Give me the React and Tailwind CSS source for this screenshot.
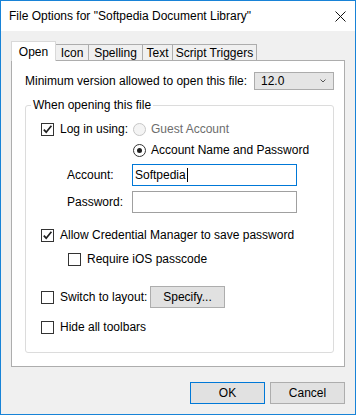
import React from "react";

function Checkbox({ checked }) {
  return (
    <span className="flex h-[13px] w-[13px] shrink-0 items-center justify-center border border-[#333333] bg-white">
      {checked && (
        <svg width="11" height="11" viewBox="0 0 11 11">
          <path d="M1.8 5.6 L4.2 8.2 L9.4 1.8" fill="none" stroke="#1f1f1f" strokeWidth="1.7" />
        </svg>
      )}
    </span>
  );
}

function Radio({ selected, disabled }) {
  return (
    <span
      className={
        disabled
          ? "flex h-[13px] w-[13px] shrink-0 items-center justify-center rounded-full border border-[#c6c6c6] bg-[#f4f4f4]"
          : "flex h-[13px] w-[13px] shrink-0 items-center justify-center rounded-full border border-[#333333] bg-white"
      }
    >
      {selected && <span className="h-[5px] w-[5px] rounded-full bg-[#1f1f1f]" />}
    </span>
  );
}

export default function App() {
  const tabs = [
    { name: "Icon", w: "w-[33px]" },
    { name: "Spelling", w: "w-[54px]" },
    { name: "Text", w: "w-[30px]" },
    { name: "Script Triggers", w: "w-[84px]" },
  ];

  return (
    <div className="flex h-[415px] w-[356px] flex-col border border-[#1883d7] bg-[#f0f0f0] font-['Liberation_Sans',Arial,sans-serif] text-[12px] leading-[16px] text-black">
      {/* Titelleiste */}
      <div className="flex h-[30px] shrink-0 items-center justify-between bg-white pl-[8px] pr-[9px]">
        <span className="pb-px">File Options for "Softpedia Document Library"</span>
        <svg width="11" height="11" viewBox="0 0 11 11" className="mt-px">
          <path d="M0.5 0.5 L10.5 10.5 M10.5 0.5 L0.5 10.5" stroke="#111" strokeWidth="1" />
        </svg>
      </div>

      <div className="flex flex-1 flex-col px-[10px] pt-[10px]">
        {/* Reiter */}
        <div className="flex h-[19px] items-end">
          <div className="relative z-10 -mb-px flex h-[20px] w-[45px] items-center justify-center border border-b-0 border-[#d9d9d9] bg-white">
            Open
          </div>
          {tabs.map((t) => (
            <div
              key={t.name}
              className={`flex h-[16px] items-center justify-center border-t border-r border-[#adadad] bg-[#f0f0f0] pt-px ${t.w}`}
            >
              {t.name}
            </div>
          ))}
        </div>

        {/* Inhalt */}
        <div className="h-[307px] border border-[#adadad] bg-white pl-[13px] pr-[10px] pt-[11px]">
          <div className="flex h-[18px] items-center justify-between">
            <span>Minimum version allowed to open this file:</span>
            <div className="flex h-[18px] w-[80px] items-center justify-between border border-[#acacac] bg-[#e5e5e5] pl-[6px] pr-[7px]">
              <span>12.0</span>
              <svg width="6" height="4" viewBox="0 0 6 4">
                <path d="M0.5 0.5 L3 3 L5.5 0.5" fill="none" stroke="#555" strokeWidth="1" />
              </svg>
            </div>
          </div>

          <fieldset className="mt-[7px] rounded-[3px] border border-[#dcdcdc] pb-[15px] pl-[5px]">
            <legend className="px-[2px]">When opening this file</legend>
            <div className="flex flex-col pl-[10px]">
              <div className="mt-[6px] flex h-[20px] items-center">
                <Checkbox checked />
                <span className="ml-[6px] w-[73px]">Log in using:</span>
                <Radio disabled />
                <span className="ml-[5px] text-[#6d6d6d]">Guest Account</span>
              </div>
              <div className="mt-px flex h-[20px] items-center pl-[92px]">
                <Radio selected />
                <span className="ml-[5px]">Account Name and Password</span>
              </div>
              <div className="mt-[4px] flex h-[22px] items-center">
                <span className="ml-[26px] w-[65px]">Account:</span>
                <div className="flex h-[22px] w-[165px] items-center border border-[#0078d7] bg-white pl-[2px]">
                  <span>Softpedia</span>
                  <span className="ml-px h-[14px] w-px bg-black" />
                </div>
              </div>
              <div className="mt-[5px] flex h-[22px] items-center">
                <span className="ml-[26px] w-[65px]">Password:</span>
                <div className="h-[22px] w-[165px] border border-[#a0a0a0] bg-white" />
              </div>
              <div className="mt-[12px] flex h-[20px] items-center">
                <Checkbox checked />
                <span className="ml-[6px]">Allow Credential Manager to save password</span>
              </div>
              <div className="mt-[4px] flex h-[20px] items-center pl-[27px]">
                <Checkbox />
                <span className="ml-[6px]">Require iOS passcode</span>
              </div>
              <div className="mt-[17px] flex h-[22px] items-center">
                <Checkbox />
                <span className="ml-[6px] w-[90px]">Switch to layout:</span>
                <button className="flex h-[22px] w-[75px] items-center justify-center border border-[#adadad] bg-[#e1e1e1]">
                  Specify...
                </button>
              </div>
              <div className="mt-[9px] flex h-[20px] items-center">
                <Checkbox />
                <span className="ml-[6px]">Hide all toolbars</span>
              </div>
            </div>
          </fieldset>
        </div>

        {/* Schaltflächen */}
        <div className="mt-[15px] flex justify-end gap-[5px]">
          <button className="flex h-[22px] w-[75px] items-center justify-center border border-[#0078d7] bg-[#e1e1e1]">
            OK
          </button>
          <button className="flex h-[22px] w-[75px] items-center justify-center border border-[#adadad] bg-[#e1e1e1]">
            Cancel
          </button>
        </div>
      </div>
    </div>
  );
}
